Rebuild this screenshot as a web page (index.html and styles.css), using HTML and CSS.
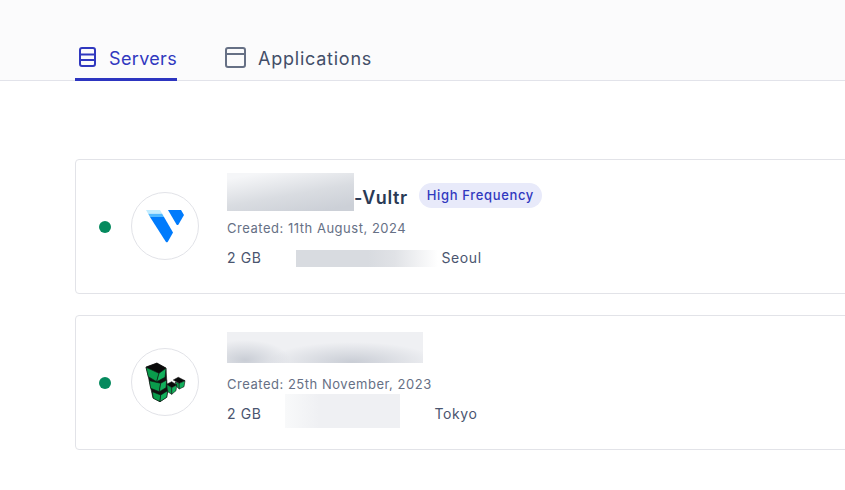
FILE: index.html
```html
<!DOCTYPE html>
<html lang="en">
<head>
  <meta charset="UTF-8">
  <meta name="viewport" content="width=device-width, initial-scale=1.0">
  <title>Servers</title>
  <link rel="stylesheet" href="styles.css">
</head>
<body>
  <header class="tabs-bar">
    <nav class="tabs">
      <a class="tab active" href="#">
        <svg class="tab-icon" width="24" height="24" viewBox="0 0 24 24" fill="none" stroke="currentColor" stroke-width="2">
          <rect x="5" y="2" width="15" height="18" rx="2"/>
          <path d="M5 8.500h15M5 14h15"/>
        </svg>
        <span class="tab-label">Servers</span>
      </a>
      <a class="tab" href="#">
        <svg class="tab-icon" width="24" height="24" viewBox="0 0 24 24" fill="none" stroke="currentColor" stroke-width="2">
          <rect x="2" y="2" width="19" height="19" rx="2"/>
          <path d="M2 8h19"/>
        </svg>
        <span class="tab-label">Applications</span>
      </a>
    </nav>
  </header>

  <main class="server-list">
    <section class="card">
      <span class="status"></span>
      <div class="logo">
        <svg width="66" height="66" viewBox="1 1 66 66">
          <path fill="#51b9ff" d="M17 21.500 19 25h14l-2-3.500z"/>
          <path fill="#c1ecff" d="M15 18l2 3.500h14L29 18z"/>
          <path fill="#007bfc" d="M19 25h14l9 15.500-5.200 9.200q-1 1.200-2 0z"/>
          <path fill="#007bfc" d="M37 18h13l3 5-5.500 9.500q-1 1-2 0z"/>
        </svg>
      </div>
      <div class="info">
        <div class="title-row">
          <span class="blur blur-title-a"></span>
          <h2 class="name">-Vultr</h2>
          <span class="badge">High Frequency</span>
        </div>
        <p class="created">Created: 11th August, 2024</p>
        <div class="specs">
          <span>2 GB</span>
          <span class="blur blur-ip-a"></span>
          <span>Seoul</span>
        </div>
      </div>
    </section>

    <section class="card">
      <span class="status"></span>
      <div class="logo">
        <svg width="66" height="66" viewBox="1 1 66 66" stroke="#111" stroke-width=".6" stroke-linejoin="round">
          <!-- black backing so the stack reads as one shape -->
          <path fill="#111" d="M15 19l11-4 9 5 .7 12 1 10.700-1 6.600L29 53.700 22 50l-2.300-10-2.400-11.300z"/>
          <!-- small cube, back -->
          <path fill="#0a0a0a" d="M42.300 32l5-2.700 6.700 3.400-5.700 2.600z"/>
          <path fill="#0a9c4c" d="M44 34l4.300 1.300V41l-2.600-2.300z"/>
          <path fill="#12b05c" d="M48.300 35.300l5.700-2.600-1 6-4.700 2.300z"/>
          <!-- small cube, front -->
          <path fill="#0a0a0a" d="M35.700 36.300l5-2.600 5 3.300-5 2.700z"/>
          <path fill="#0a9c4c" d="M35.700 36.300l5 3.400v6.600l-4-2.600z"/>
          <path fill="#12b05c" d="M40.700 39.700l5-2.700-.7 5.700-4.300 3.600z"/>
          <!-- bottom of the stack -->
          <path fill="#0a9c4c" d="M21.300 43.700l8.400 3.300-.7 6.700-6.700-3.400z"/>
          <path fill="#12b05c" d="M29.700 47l7-4.300-1 6.600-6.700 4.400z"/>
          <!-- middle of the stack -->
          <path fill="#0a9c4c" d="M18.300 32.700l11.400 2.600-1.400 8.400-8.600-3.400z"/>
          <path fill="#12b05c" d="M29.700 35.300l6-3.300-.7 7.700-6.700 4z"/>
          <!-- top cube -->
          <path fill="#0a0a0a" d="M15 19.300l10.700-4L35 20.300l-7 5z"/>
          <path fill="#0a9c4c" d="M15 19.300l13 6-2.300 8.400-8.400-5z"/>
          <path fill="#12b05c" d="M28 25.300l7-5-1 9-8.300 4.400z"/>
        </svg>
      </div>
      <div class="info">
        <div class="title-row">
          <span class="blur blur-title-b"></span>
        </div>
        <p class="created">Created: 25th November, 2023</p>
        <div class="specs">
          <span>2 GB</span>
          <span class="blur blur-ip-b"></span>
          <span>Tokyo</span>
        </div>
      </div>
    </section>
  </main>
</body>
</html>
```

FILE: styles.css
```css
html, body {
  margin: 0;
  padding: 0;
  overflow: hidden;
  height: 100%;
}
body {
  font-family: Inter, "Open Sans", sans-serif;
  background: #fff;
  color: #4a556f;
}
.tabs-bar {
  height: 80px;
  background: #fbfbfc;
  border-bottom: 1px solid #e2e3ea;
  padding-left: 75px;
  display: flex;
  align-items: flex-end;
}
.tabs {
  display: flex;
  gap: 47px;
  margin-bottom: -1px;
}
.tab {
  display: flex;
  align-items: flex-start;
  gap: 10px;
  height: 32px;
  border-bottom: 3px solid transparent;
  font-size: 18px;
  line-height: 24px;
  letter-spacing: 0.75px;
  color: #434e68;
  text-decoration: none;
}
.tab-label {
  margin-top: 1px;
}
.tab .tab-icon {
  color: #667085;
}
.tab.active {
  color: #3038bf;
  letter-spacing: 0.35px;
  border-bottom-color: #2d35c0;
}
.tab.active .tab-icon {
  color: #3038bf;
}
.server-list {
  padding: 78px 0 0 75px;
  margin-right: -20px;
  display: flex;
  flex-direction: column;
  gap: 21px;
}
.card {
  display: flex;
  align-items: center;
  height: 133px;
  padding-left: 23px;
  border: 1px solid #e2e3e8;
  border-radius: 4px;
  background: #fff;
}
.status {
  width: 12px;
  height: 12px;
  border-radius: 50%;
  background: #058a5e;
  flex: none;
}
.logo {
  width: 68px;
  height: 68px;
  margin: 0 28px 2px 20px;
  border: 1px solid #e2e3e8;
  border-radius: 50%;
  box-sizing: border-box;
  flex: none;
  display: flex;
  align-items: center;
  justify-content: center;
}
.info {
  align-self: flex-start;
  padding-top: 13px;
}
.title-row {
  display: flex;
  align-items: center;
  height: 38px;
}
.name {
  margin: 10px 11px 0 0;
  font-size: 18px;
  font-weight: 600;
  letter-spacing: 0.6px;
  color: #2a3a55;
}
.badge {
  margin-top: 7px;
  padding: 4px 8px;
  line-height: 17px;
  border-radius: 13px;
  background: #e8eafa;
  color: #3038bf;
  font-size: 13px;
  font-weight: 500;
  letter-spacing: 0.65px;
}
.created {
  margin: 7px 0 0;
  font-size: 13px;
  line-height: 20px;
  letter-spacing: 0.52px;
  color: #667085;
}
.specs {
  display: flex;
  align-items: center;
  height: 20px;
  margin-top: 9px;
  font-size: 14px;
  letter-spacing: 0.6px;
  color: #4a556f;
}
.blur {
  display: block;
  flex: none;
}
.blur-title-a {
  width: 127px;
  height: 38px;
  background: linear-gradient(170deg, #f5f6f8 10%, #d9dce1 55%, #ccd0d7 90%);
}
.blur-title-b {
  width: 196px;
  height: 31px;
  margin-bottom: 1px;
  background:
    radial-gradient(ellipse 45px 20px at 18px 28px, #c9cdd5, transparent),
    radial-gradient(ellipse 85px 20px at 125px 30px, #c9cdd5, transparent),
    #eff0f3;
}
.blur-ip-a {
  width: 145px;
  height: 17px;
  margin: 3px 0 0 35px;
  background: linear-gradient(90deg, #d8dbe0 50%, #e0e2e6 68%, #fff 98%);
}
.blur-ip-b {
  width: 115px;
  height: 34px;
  margin: 0 34px 4px 24px;
  background: linear-gradient(90deg, #f8f9fa, #eff0f3 30%);
}
```
